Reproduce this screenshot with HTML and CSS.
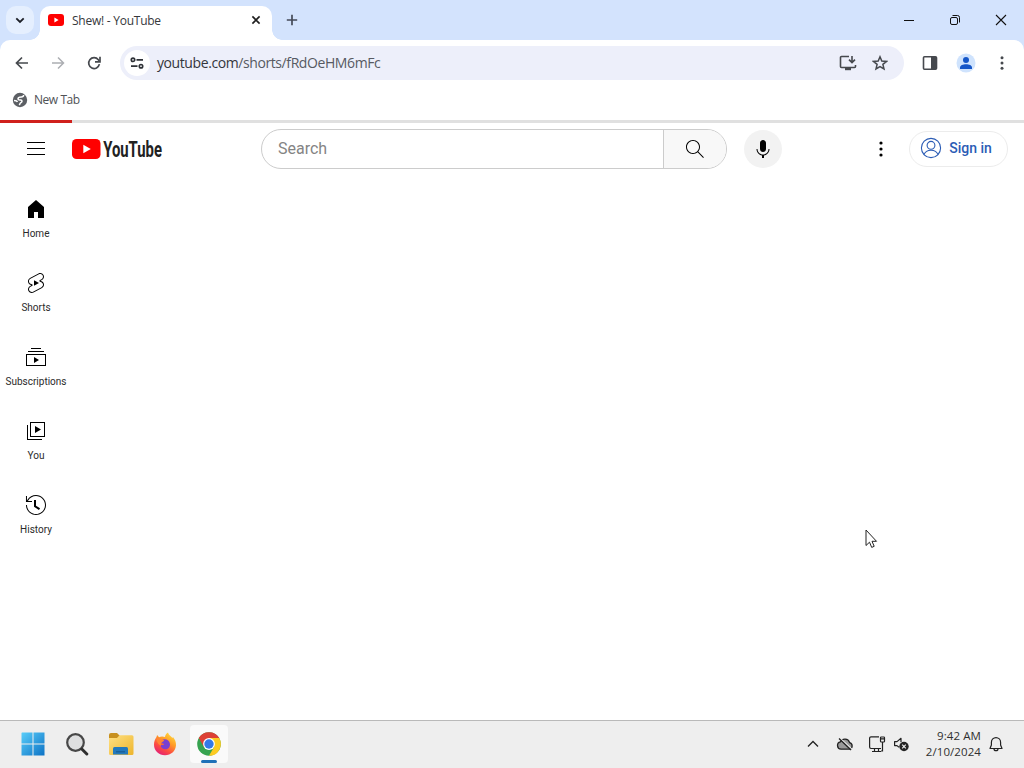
FILE: index.html
```html
<!DOCTYPE html>
<html lang="en">
<head>
    <meta charset="UTF-8">
    <meta name="viewport" content="width=device-width, initial-scale=1.0">
    <title>Shew! - YouTube</title>
    <link rel="stylesheet" href="styles.css">
</head>
<body>

<!-- Browser window -->
<div class="tabstrip">
    <button class="tab-search">
        <svg width="28" height="28" viewBox="0 0 28 28"><path d="M10.3 12.3l3.7 3.7 3.7-3.7" fill="none" stroke="#1c1f26" stroke-width="1.8"/></svg>
    </button>
    <div class="tab">
        <svg width="16" height="16" viewBox="0 0 16 16"><rect y="2" width="16" height="12" rx="3" fill="#f00"/><path d="M6.4 5.4L10.6 8l-4.2 2.6z" fill="#fff"/></svg>
        <span class="tab-title">Shew! - YouTube</span>
        <svg width="10" height="10" viewBox="0 0 10 10"><path d="M1.4 1.4l7.2 7.2M8.6 1.4L1.4 8.6" stroke="#1f1f1f" stroke-width="1.6"/></svg>
    </div>
    <svg class="new-tab" width="12" height="12" viewBox="0 0 12 12"><path d="M6 .8v10.4M.8 6h10.4" stroke="#444a58" stroke-width="1.7"/></svg>
    <div class="window-buttons">
        <svg width="46" height="40" viewBox="0 0 46 40"><path d="M18 20.5h10" stroke="#111" stroke-width="1"/></svg>
        <svg width="46" height="40" viewBox="0 0 46 40"><g fill="none" stroke="#111"><rect x="18.5" y="17.5" width="7" height="7" rx="1.5"/><path d="M20.5 15.5H25.5a2 2 0 0 1 2 2V22.5"/></g></svg>
        <svg width="46" height="40" viewBox="0 0 46 40"><path d="M18 15l10 10M28 15L18 25" stroke="#111" stroke-width="1.1"/></svg>
    </div>
</div>

<div class="toolbar-back">
<div class="toolbar">
    <svg class="nav" width="16" height="16" viewBox="0 0 16 16"><path d="M14 8H3M8 2.5L2.5 8 8 13.5" fill="none" stroke="#46494e" stroke-width="1.7"/></svg>
    <svg class="nav" width="16" height="16" viewBox="0 0 16 16"><path d="M2 8h11M8 2.5L13.5 8 8 13.5" fill="none" stroke="#acaeb2" stroke-width="1.5"/></svg>
    <svg class="nav" width="16" height="16" viewBox="0 0 16 16"><path d="M13.4 9.2A5.4 5.4 0 1 1 12.3 4.7L13.3 5.9" fill="none" stroke="#46494e" stroke-width="1.7"/><path d="M14 1.8V6.8H9" fill="none" stroke="#46494e" stroke-width="1.7"/></svg>
    <div class="omnibox">
        <div class="site-info">
            <svg width="14" height="12" viewBox="0 0 14 12"><g fill="none" stroke="#2f3237" stroke-width="1.7"><circle cx="3" cy="2.8" r="1.7"/><path d="M6.5 2.8H13M1 9.2h6.5"/><circle cx="11" cy="9.2" r="1.7"/></g></svg>
        </div>
        <span class="url">youtube.com<i>/shorts/fRdOeHM6mFc</i></span>
        <svg width="18" height="16" viewBox="0 0 18 16"><path d="M10 1.5H2.5a1 1 0 0 0-1 1v9a1 1 0 0 0 1 1h13a1 1 0 0 0 1-1V10" fill="none" stroke="#46494e" stroke-width="1.6"/><path d="M6 13h6v2.2H6z" fill="#46494e"/><path d="M13 1v6M10 4.6l3 3 3-3" fill="none" stroke="#46494e" stroke-width="1.6"/></svg>
        <svg class="star" width="16" height="16" viewBox="0 0 16 16"><path d="M8 1.8l1.8 4.2 4.7.4-3.6 3 1.1 4.6L8 11.6 4 14l1.1-4.6-3.6-3L6.2 6z" fill="none" stroke="#46494e" stroke-width="1.5"/></svg>
    </div>
    <svg class="panel" width="16" height="16" viewBox="0 0 16 16"><rect x="1.5" y="1.7" width="13" height="12.6" rx="1" fill="none" stroke="#46494e" stroke-width="1.6"/><path d="M9 2h5.5v12H9z" fill="#46494e"/></svg>
    <svg class="profile" width="20" height="20" viewBox="0 0 20 20"><circle cx="10" cy="10" r="9.5" fill="#cfe3fd"/><circle cx="10" cy="7" r="3" fill="#1556c8"/><path d="M4 16v-1.5c0-2.1 3-3.3 6-3.3s6 1.2 6 3.3V16z" fill="#1556c8"/></svg>
    <svg width="16" height="16" viewBox="0 0 16 16"><g fill="#46494e"><circle cx="8" cy="2.8" r="1.5"/><circle cx="8" cy="8" r="1.5"/><circle cx="8" cy="13.2" r="1.5"/></g></svg>
</div>
</div>

<div class="bookmarks">
    <svg width="16" height="16" viewBox="0 0 16 16"><circle cx="8" cy="8" r="7.2" fill="#5c5f64"/><path d="M11.6 3c0 1.5-.8 2-2.4 2-1.8 0-3.2.8-3.2 1.9 0 1.2 1.5 1 2.8 1.2 1.5.2 1.6 1.9.3 2.4-1.2.4-1.1 1.5-1.8 2.7M2 8.4c1.7 0 3 .2 3.4 1.6" fill="none" stroke="#fff" stroke-width="1.5"/></svg>
    <span>New Tab</span>
</div>

<!-- YouTube page -->
<div class="page">
    <div class="progress"><div class="progress-bar"></div></div>
    <header class="masthead">
        <svg class="menu" width="24" height="24" viewBox="0 0 24 24"><path d="M21 6H3V5h18v1zm0 5H3v1h18v-1zm0 6H3v1h18v-1z"/></svg>
        <svg class="logo" width="96" height="28" viewBox="0 0 96 28">
            <rect x="0" y="4" width="28.5" height="20" rx="4.6" fill="#f00"/>
            <path d="M11.3 9.7v8.6l7.5-4.3z" fill="#fff"/>
            <text transform="translate(31.2 22.3) scale(.66 1)">YouTube</text>
        </svg>
        <div class="search">
            <div class="search-input">Search</div>
            <button class="search-button">
                <svg width="24" height="24" viewBox="0 0 24 24"><path d="m20.87 20.17-5.59-5.59C16.35 13.35 17 11.75 17 10c0-3.87-3.13-7-7-7s-7 3.13-7 7 3.13 7 7 7c1.75 0 3.35-.65 4.58-1.71l5.59 5.59.7-.71zM10 16c-3.31 0-6-2.69-6-6s2.69-6 6-6 6 2.69 6 6-2.69 6-6 6z"/></svg>
            </button>
        </div>
        <button class="mic">
            <svg width="24" height="24" viewBox="0 0 24 24"><path d="M12 3c-1.66 0-3 1.37-3 3.07v5.86c0 1.7 1.34 3.07 3 3.07s3-1.37 3-3.07V6.07C15 4.37 13.66 3 12 3zM18.5 12h-1c0 3.03-2.47 5.5-5.5 5.5S6.5 15.03 6.5 12h-1c0 3.24 2.39 5.93 5.5 6.41V21h2v-2.59c3.11-.48 5.5-3.17 5.5-6.41z"/></svg>
        </button>
        <svg class="settings" width="24" height="24" viewBox="0 0 24 24"><circle cx="12" cy="6" r="1.6"/><circle cx="12" cy="12" r="1.6"/><circle cx="12" cy="18" r="1.6"/></svg>
        <button class="sign-in">
            <svg width="24" height="24" viewBox="0 0 24 24"><g fill="none" stroke="#2b5cb5" stroke-width="1.1"><circle cx="12" cy="12" r="9.6"/><circle cx="12" cy="9.3" r="3.9"/><path d="M5 18.6c1.2-3.2 4-4.4 7-4.4s5.8 1.2 7 4.4"/></g></svg>
            <span>Sign in</span>
        </button>
    </header>

    <nav class="guide">
        <a class="guide-item">
            <svg width="24" height="24" viewBox="0 0 24 24"><path d="M4 21V10.08l8-6.96 8 6.96V21h-6v-6h-4v6H4z"/></svg>
            <span>Home</span>
        </a>
        <a class="guide-item">
            <svg width="24" height="24" viewBox="0 0 24 24"><path d="M10 14.65v-5.3L15 12l-5 2.65zm7.77-4.33c-.77-.32-1.2-.5-1.2-.5L18 9.06c1.84-.96 2.53-3.23 1.56-5.06s-3.24-2.53-5.07-1.56L6 6.94c-1.29.68-2.07 2.04-2 3.49.07 1.42.93 2.67 2.22 3.25.03.01 1.2.5 1.2.5L6 14.93c-1.83.97-2.53 3.24-1.56 5.07.97 1.83 3.24 2.53 5.07 1.56l8.5-4.5c1.29-.68 2.06-2.04 1.99-3.49-.07-1.42-.94-2.68-2.23-3.25zm-.23 5.86l-8.5 4.5c-1.34.71-3.01.2-3.72-1.14-.71-1.34-.2-3.01 1.14-3.72l2.04-1.08v-1.21l-.69-.28-1.11-.46c-.99-.41-1.65-1.35-1.7-2.41-.05-1.06.52-2.06 1.46-2.56l8.5-4.5c1.34-.71 3.01-.2 3.72 1.14.71 1.34.2 3.01-1.14 3.72L15.5 9.26v1.21l1.8.74c.99.41 1.65 1.35 1.7 2.41.05 1.06-.52 2.06-1.46 2.56z"/></svg>
            <span>Shorts</span>
        </a>
        <a class="guide-item">
            <svg width="24" height="24" viewBox="0 0 24 24"><path d="M10 18v-6l5 3-5 3zm7-15H7v1h10V3zm3 3H4v1h16V6zm2 3H2v12h20V9zM3 10h18v10H3V10z"/></svg>
            <span>Subscriptions</span>
        </a>
        <a class="guide-item">
            <svg width="24" height="24" viewBox="0 0 24 24"><path d="m11 7 6 3.5-6 3.5V7zm7 13H4V6H3v15h15v-1zm3-2H6V3h15v15zM7 17h13V4H7v13z"/></svg>
            <span>You</span>
        </a>
        <a class="guide-item">
            <svg width="24" height="24" viewBox="0 0 24 24"><path d="M14.97 16.95 10 13.87V7h2v5.76l4.03 2.49-1.06 1.7zM22 12c0 5.51-4.49 10-10 10S2 17.51 2 12h1c0 4.96 4.04 9 9 9s9-4.04 9-9-4.04-9-9-9C8.81 3 5.92 4.64 4.28 7.38c-.11.18-.22.37-.31.56L3.94 8H8v1H1.96V3h1v4.74c.04-.09.07-.17.11-.25.11-.22.23-.42.35-.63C5.22 3.86 8.51 2 12 2c5.51 0 10 4.49 10 10z"/></svg>
            <span>History</span>
        </a>
    </nav>
</div>

<!-- Windows taskbar -->
<div class="taskbar">
    <div class="app">
        <svg width="24" height="24" viewBox="0 0 24 24">
            <defs><linearGradient id="win" gradientUnits="userSpaceOnUse" x1="0" y1="0" x2="24" y2="24"><stop offset="0" stop-color="#5bd0fb"/><stop offset="1" stop-color="#0b70c4"/></linearGradient></defs>
            <path d="M1 .5h10.5V11.5H.5V1zM12.5.5h11v11h-11zM.5 12.5h11v11H.5zM12.5 12.5h11v11h-11z" fill="url(#win)"/>
        </svg>
    </div>
    <div class="app">
        <svg width="24" height="24" viewBox="0 0 24 24"><circle cx="10.5" cy="10.5" r="8.3" fill="#dedfe0" stroke="#474747" stroke-width="2.2"/><path d="M16.8 17l5 5" stroke="#303030" stroke-width="3" stroke-linecap="round"/></svg>
    </div>
    <div class="app">
        <svg width="26" height="24" viewBox="0 0 26 24">
            <defs><linearGradient id="folder" x1="0" y1="0" x2="1" y2="1"><stop offset="0" stop-color="#ffe083"/><stop offset="1" stop-color="#edb52c"/></linearGradient></defs>
            <path d="M1 3a2 2 0 0 1 2-2h6l2.5 2.5V8H1z" fill="#c79020"/>
            <path d="M1 6h8l2.5-2.7H24a1.5 1.5 0 0 1 1.5 1.5V21.5A1.5 1.5 0 0 1 24 23H2.5A1.5 1.5 0 0 1 1 21.5z" fill="url(#folder)"/>
            <path d="M5 22.5v-6a1.5 1.5 0 0 1 1.5-1.5h12A1.5 1.5 0 0 1 20 16.5v6z" fill="#2379bd"/><path d="M8 19.8h9" stroke="#165b94" stroke-width="1.2"/>
        </svg>
    </div>
    <div class="app">
        <svg width="24" height="24" viewBox="0 0 24 24">
            <defs><linearGradient id="fox" x1=".85" y1="0" x2=".25" y2="1"><stop offset="0" stop-color="#ffe33f"/><stop offset=".4" stop-color="#ff9a26"/><stop offset=".72" stop-color="#fc4943"/><stop offset="1" stop-color="#e01c7c"/></linearGradient></defs>
            <path d="M3.5 5l.6-2 2 2.2C7.5 4.3 10 4 12 5c.3-2 1.5-3.7 3-4.5.5 2.6 3 3.5 4.5 5.5l.5-1c2 2.5 3.2 5 3 8.3C22.7 19 18 23.3 12 23.3 6 23.3 1 18.8 1 12.8 1 9.8 2 7 3.5 5z" fill="url(#fox)"/>
            <path d="M8.5 8.5c3-2.5 8-1 8.5 3.5.2 3.5-2.4 5.5-5 5.3-3-.2-4.5-2.3-4.3-4.6 1.3.6 2.3.4 3.4-.5-.8-.7-2-.7-3.3-.9z" fill="#7940d1"/>
            <path d="M3 6.5c2-1 4 .2 5.2 1.2l3 .4c-.3 1.3-1.7 2-2.7 2.6-.8.6-.8 1.8-.3 3-2-.3-4-2.5-5.2-7.2z" fill="#ff8535"/>
        </svg>
    </div>
    <div class="app active">
        <svg width="24" height="24" viewBox="0 0 24 24">
            <circle cx="12" cy="12" r="11.8" fill="#36a350"/>
            <path d="M12 12L6.9 15 1.78 6.1A11.8 11.8 0 0 1 22.22 6.1H12z" fill="#dd4035"/>
            <path d="M12 6.1h10.22A11.8 11.8 0 0 1 12 23.8L17.11 15z" fill="#fdcb22"/>
            <circle cx="12" cy="12" r="5.9" fill="#fff"/><circle cx="12" cy="12" r="4.7" fill="#3479e8"/>
        </svg>
    </div>

    <div class="tray">
        <svg width="12" height="12" viewBox="0 0 12 12"><path d="M1 8.5L6 3.5l5 5" fill="none" stroke="#222" stroke-width="1.3"/></svg>
        <svg class="cloud" width="18" height="16" viewBox="0 0 18 16"><path d="M5 13.2a3.7 3.7 0 0 1-.6-7.3 5 5 0 0 1 9.2.7A3.4 3.4 0 0 1 13.5 13.2z" fill="#999" stroke="#222" stroke-width="1.3"/><path d="M4.3 2.5l11.5 10.5" stroke="#eee" stroke-width="1.2"/><path d="M3 2.5l12 11.5" stroke="#222" stroke-width="1.3"/></svg>
        <svg class="network" width="18" height="18" viewBox="0 0 18 18"><g fill="none" stroke="#222" stroke-width="1.2"><path d="M11 1.8H3A1.4 1.4 0 0 0 1.6 3.2v8.9A1.4 1.4 0 0 0 3 13.5h10M6.5 13.5v3M10.5 13.5v3M4 16.5h9"/><rect x="12.5" y="2" width="4" height="5" rx=".8"/><path d="M14.5 7v9H13M12.5 3.8h4"/></g></svg>
        <svg class="volume" width="17" height="16" viewBox="0 0 17 16"><path d="M6 11.2L4 9.6H1.6V5.6H4l4-3.3v4" fill="none" stroke="#222" stroke-width="1.2" stroke-linejoin="round"/><circle cx="11" cy="10.5" r="4.7" fill="#242424"/><path d="M9.2 8.7l3.6 3.6M12.8 8.7l-3.6 3.6" stroke="#eee" stroke-width="1.2"/></svg>
        <div class="clock"><span>9:42 AM</span><span>2/10/2024</span></div>
        <svg class="bell" width="16" height="16" viewBox="0 0 16 16"><path d="M8 1.6a4.6 4.6 0 0 0-4.6 4.6V9L2 12.5h12L12.6 9V6.2A4.6 4.6 0 0 0 8 1.6zM6 12.7a2 2 0 0 0 4 0" fill="none" stroke="#222" stroke-width="1.2" stroke-linejoin="round"/></svg>
    </div>
</div>

<svg class="cursor" width="14" height="21" viewBox="0 0 14 21"><path d="M1 1v15.5l3.5-3.3 2.2 5.2 2.5-1.1-2.2-5H11.5z" fill="#fff" stroke="#222" stroke-width="1"/></svg>

</body>
</html>
```

FILE: styles.css
```css
* {
    box-sizing: border-box;
}
body {
    margin: 0;
    height: 100vh;
    display: flex;
    flex-direction: column;
    overflow: hidden;
    background: #fff;
    font-family: "Open Sans", sans-serif;
}
svg {
    display: block;
    flex: none;
}
button {
    border: none;
    padding: 0;
    font-family: inherit;
    display: flex;
    align-items: center;
    justify-content: center;
}

/* browser */
.tabstrip {
    height: 40px;
    flex: none;
    background: #d3e3fd;
    display: flex;
    align-items: center;
    padding-left: 6px;
}
.tab-search {
    width: 28px;
    height: 28px;
    border-radius: 10px;
    background: #e5effe;
}
.tab {
    position: relative;
    width: 232px;
    height: 34px;
    margin: 6px 0 0 6px;
    padding: 0 11px 6px 8px;
    border-radius: 10px 10px 0 0;
    background: #fff;
    display: flex;
    align-items: center;
}
.tab::before,
.tab::after {
    content: "";
    position: absolute;
    bottom: 0;
    width: 10px;
    height: 10px;
}
.tab::before {
    left: -10px;
    background: radial-gradient(circle at 0 0, transparent 9.5px, #fff 10px);
}
.tab::after {
    right: -10px;
    background: radial-gradient(circle at 100% 0, transparent 9.5px, #fff 10px);
}
.tab-title {
    flex: 1;
    padding-left: 8px;
    font-size: 12px;
    letter-spacing: -0.25px;
    color: #36383c;
}
.new-tab {
    margin-left: 14px;
}
.window-buttons {
    margin-left: auto;
    display: flex;
}
.toolbar-back {
    flex: none;
    background: #d3e3fd;
}
.toolbar {
    height: 46px;
    display: flex;
    align-items: center;
    padding: 0 14px;
    border-radius: 10px 10px 0 0;
    background: #fff;
}
.nav {
    margin-right: 20px;
}
.omnibox {
    width: 784px;
    height: 34px;
    margin-left: -2px;
    padding: 0 16px 0 4px;
    border-radius: 17px;
    background: #edeffa;
    display: flex;
    align-items: center;
}
.site-info {
    width: 26px;
    height: 26px;
    border-radius: 50%;
    background: #fff;
    display: flex;
    align-items: center;
    justify-content: center;
}
.url {
    flex: 1;
    padding: 0 0 1px 7px;
    font-size: 14px;
    letter-spacing: -0.41px;
    color: #34363c;
}
.url i {
    font-style: normal;
    color: #575a62;
}
.star {
    margin-left: 15px;
}
.panel {
    margin-left: 18px;
}
.profile {
    margin: 0 18px;
}
.bookmarks {
    height: 34px;
    flex: none;
    display: flex;
    align-items: center;
    gap: 6px;
    padding: 0 12px 6px;
    font-size: 12px;
    letter-spacing: -0.45px;
    color: #505256;
}
.bookmarks span {
    padding-bottom: 1px;
}

/* youtube */
.page {
    flex: 1;
    font-family: Roboto, sans-serif;
}
.progress {
    height: 3px;
    background: #e0e0e0;
}
.progress-bar {
    width: 72px;
    height: 3px;
    background: #d0201c;
}
.masthead {
    height: 52px;
    display: flex;
    align-items: center;
    padding: 0 16px 0 24px;
}
.logo {
    margin-left: 24px;
}
.logo text {
    font-family: Roboto, sans-serif;
    font-size: 22.5px;
    font-weight: 700;
    fill: #212121;
}
.search {
    width: 466px;
    height: 40px;
    margin-left: 93px;
    display: flex;
    border: 1px solid #ccc;
    border-radius: 20px;
    overflow: hidden;
}
.search-input {
    flex: 1;
    padding-left: 16px;
    line-height: 38px;
    font-size: 16px;
    color: #848484;
}
.search-button {
    width: 63px;
    border-left: 1px solid #ccc;
    background: #f8f8f8;
}
.mic {
    width: 38px;
    height: 38px;
    margin-left: 17px;
    border-radius: 50%;
    background: #f2f2f2;
}
.settings {
    margin-left: auto;
}
.sign-in {
    width: 99px;
    height: 36px;
    margin-left: 16px;
    padding: 0 6px 2px 0;
    border: 1px solid #ececec;
    border-radius: 18px;
    background: #fff;
    gap: 6px;
    font-size: 14px;
    font-weight: 500;
    color: #2b5cb5;
}
.guide {
    width: 72px;
    padding-top: 8px;
}
.guide-item {
    height: 74px;
    padding-top: 14px;
    display: flex;
    flex-direction: column;
    align-items: center;
    font-size: 10px;
    line-height: 14px;
    color: #2a2a2a;
}
.guide-item span {
    margin-top: 6px;
}

/* taskbar */
.taskbar {
    height: 48px;
    flex: none;
    display: flex;
    align-items: center;
    padding: 0 20px 2px 14px;
    border-top: 1px solid #b9b9b9;
    background: #eee;
}
.app {
    position: relative;
    width: 38px;
    height: 38px;
    margin-right: 6px;
    border-radius: 4px;
    display: flex;
    align-items: center;
    justify-content: center;
}
.active {
    background: #fafafa;
}
.active::after {
    content: "";
    position: absolute;
    left: 11px;
    bottom: 0;
    width: 16px;
    height: 3px;
    border-radius: 2px;
    background: #1f71b8;
}
.tray {
    margin-left: auto;
    display: flex;
    align-items: center;
}
.cloud {
    margin-left: 17px;
}
.network {
    margin-left: 14px;
}
.volume {
    margin-left: 7px;
}
.clock {
    width: 71px;
    display: flex;
    flex-direction: column;
    align-items: flex-end;
    font-size: 11.5px;
    line-height: 16px;
    letter-spacing: 0.08px;
    color: #303030;
}
.bell {
    margin-left: 7px;
}
.cursor {
    position: absolute;
    left: 865px;
    top: 529px;
}
```
